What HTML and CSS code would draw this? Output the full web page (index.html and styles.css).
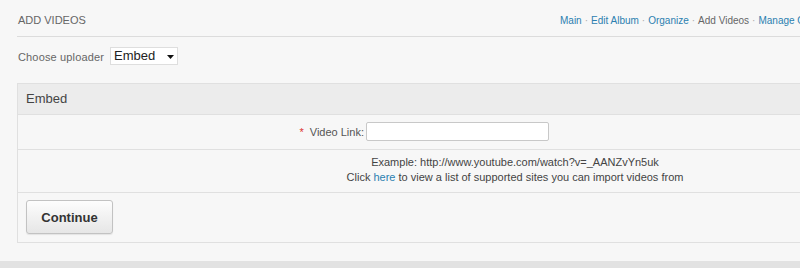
FILE: index.html
```html
<!DOCTYPE html>
<html>
<head>
<meta charset="utf-8">
<link rel="stylesheet" href="styles.css">
</head>
<body>
<div class="page">
  <div class="topbar">
    <div class="title">ADD VIDEOS</div>
    <div class="crumbs">
      <a href="#">Main</a><span class="sep">·</span><a href="#">Edit Album</a><span class="sep">·</span><a href="#">Organize</a><span class="sep">·</span><span class="current">Add Videos</span><span class="sep">·</span><a href="#">Manage Order</a>
    </div>
  </div>
  <div class="chooser">
    <label class="chooser-label">Choose uploader</label>
    <span class="select-wrap">
      <select class="select"><option>Embed</option></select>
      <svg class="select-arrow" width="7" height="4" viewBox="0 0 7 4"><path d="M0 0h7L3.5 4z" fill="#111"/></svg>
    </span>
  </div>
  <div class="panel">
    <div class="panel-head">Embed</div>
    <div class="row field-row">
      <div class="field-label"><span class="req">*</span> Video Link:</div>
      <input class="text-input" type="text">
    </div>
    <div class="row note-row">
      <div>Example: http://www.youtube.com/watch?v=_AANZvYn5uk</div>
      <div>Click <a href="#">here</a> to view a list of supported sites you can import videos from</div>
    </div>
    <div class="row action-row">
      <button class="btn">Continue</button>
    </div>
  </div>
  <div class="footer-band"></div>
</div>
</body>
</html>
```

FILE: styles.css
```css
html, body {
  margin: 0;
  padding: 0;
  background: #f7f7f7;
  overflow: hidden;
  height: 268px;
}
body {
  font-family: "Liberation Sans", Arial, sans-serif;
  font-size: 11px;
  color: #555;
}
.page {
  width: 1100px;
  display: flex;
  flex-direction: column;
}
.topbar {
  margin-left: 17px;
  height: 36px;
  border-bottom: 1px solid #dcdcdc;
  display: flex;
  align-items: flex-start;
}
.title {
  flex: 0 0 542px;
  padding-left: 1px;
  padding-top: 13px;
  font-size: 11px;
  line-height: 14px;
  color: #666;
}
.crumbs {
  padding-top: 14px;
  font-size: 10px;
  line-height: 13px;
  white-space: nowrap;
  color: #666;
}
.crumbs a {
  color: #2b80b0;
  text-decoration: none;
}
.crumbs .sep {
  color: #aaa;
  padding: 0 3px;
}
.chooser {
  margin-left: 18px;
  margin-top: 10px;
  display: flex;
  align-items: center;
  gap: 6px;
  height: 18px;
}
.chooser-label {
  color: #666;
  font-size: 11px;
  letter-spacing: 0.15px;
  padding-top: 1px;
}
.select-wrap {
  position: relative;
  display: inline-block;
}
.select {
  appearance: none;
  -webkit-appearance: none;
  width: 68px;
  height: 18px;
  box-sizing: border-box;
  border: 1px solid #dedede;
  background: #fff;
  font-family: "Liberation Sans", Arial, sans-serif;
  font-size: 13px;
  line-height: 16px;
  color: #222;
  padding: 0 0 0 3px;
  margin: 0;
  border-radius: 0;
}
.select-arrow {
  position: absolute;
  left: 57px;
  top: 8px;
  pointer-events: none;
}
.panel {
  margin-left: 17px;
  margin-top: 18px;
  width: 994px;
  border: 1px solid #e0e0e0;
  background: #f7f7f7;
}
.panel-head {
  height: 30px;
  background: #ececec;
  border-bottom: 1px solid #e0e0e0;
  font-size: 13px;
  line-height: 30px;
  padding-left: 8px;
  color: #444;
}
.row {
  border-bottom: 1px solid #e0e0e0;
}
.row:last-child {
  border-bottom: none;
}
.field-row {
  display: flex;
  align-items: center;
  padding: 7px 0 8px;
}
.field-label {
  width: 346px;
  text-align: right;
  padding-right: 2px;
  color: #555;
  font-size: 11px;
}
.req {
  color: #d33;
  padding-right: 3px;
}
.text-input {
  width: 183px;
  height: 19px;
  box-sizing: border-box;
  border: 1px solid #c8c8c8;
  border-radius: 2px;
  background: #fff;
  margin: 0;
  padding: 0 3px;
}
.note-row {
  padding: 5px 0 7px;
  text-align: center;
  line-height: 15px;
  color: #444;
}
.note-row a {
  color: #2b80b0;
  text-decoration: none;
}
.action-row {
  padding: 7px 0 8px 8px;
}
.btn {
  width: 87px;
  height: 34px;
  box-sizing: border-box;
  border: 1px solid #c2c2c2;
  border-radius: 3px;
  background: linear-gradient(#fdfdfd, #e6e6e6);
  box-shadow: 0 1px 1px rgba(0,0,0,0.08);
  font-family: "Liberation Sans", Arial, sans-serif;
  font-size: 13px;
  font-weight: bold;
  color: #333;
  padding: 0;
  display: block;
}
.footer-band {
  margin-top: 18px;
  height: 10px;
  background: #e2e2e2;
}
```
